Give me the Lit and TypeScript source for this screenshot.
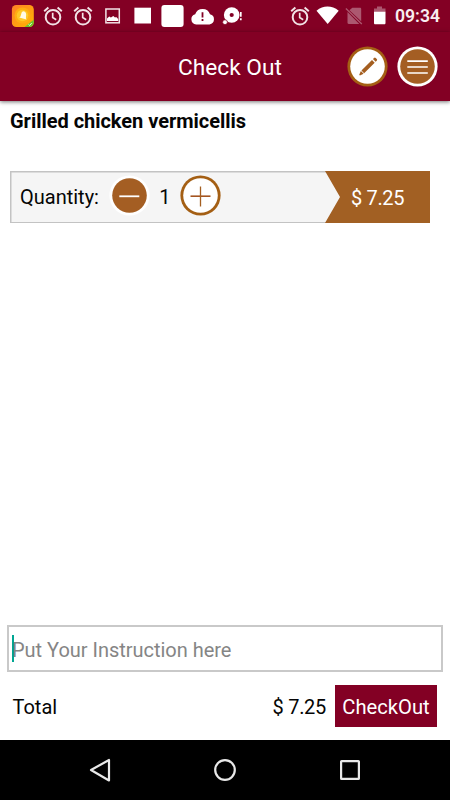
import { LitElement, html, css, svg } from "lit";
import { customElement, property } from "lit/decorators.js";

const alarm = svg`
  <g fill="none" stroke="#f2e2e6" stroke-width="2">
    <circle cx="15" cy="17.2" r="7.3"/>
    <path d="M6.200 11.200l4.200-3.600M23.800 11.200l-4.200-3.600"/>
    <path d="M14.700 12.800v4.800l3.500 2.100" stroke-width="1.700"/>
  </g>`;

const notifications = [
  svg`
    <defs>
      <linearGradient id="sun" x1="0" y1="0" x2="1" y2="1">
        <stop offset="0" stop-color="#ff8128"/><stop offset="1" stop-color="#ffb500"/>
      </linearGradient>
      <clipPath id="tile"><rect x="3.800" y="5" width="22" height="22" rx="4.500"/></clipPath>
    </defs>
    <g clip-path="url(#tile)">
      <rect x="3.500" y="5" width="22.500" height="22" fill="url(#sun)"/>
      <circle cx="14.500" cy="15.500" r="8" fill="#ffae12"/>
      <circle cx="14.500" cy="15.500" r="5.800" fill="#ffc928"/>
      <path d="M15.500 11.200c2.200.400 3 2.200 2.600 4.200l-.200 2.800.600 1.300-7.200-1.900 1.200-1.100.700-2.500c.400-1.800 1-2.700 2.300-2.800z" fill="#fffbe8"/>
      <path d="M26 19.500V27h-9.500z" fill="#6cc52c"/>
      <path d="M20.500 24.400l1.200 1 2-2.400" fill="none" stroke="#e8ffd5" stroke-width="1"/>
    </g>`,
  alarm,
  alarm,
  svg`
    <rect x="7.900" y="9" width="13.400" height="13.800" fill="none" stroke="#f2e2e6" stroke-width="1.500"/>
    <path d="M9 21v-2.600l2.200-2 1.700 1.200 2.400-1.700 1.700 1.600 1.200-.600 2 2V21z" fill="#fff"/>`,
  svg`<rect x="6.400" y="7.700" width="16.600" height="15.800" fill="#fff"/>`,
  svg`<rect x="3.400" y="5" width="22.200" height="22" rx="3" fill="#fff"/>`,
  svg`
    <path d="M8.200 24.500a5.200 5.200 0 0 1-1-10.200 7.800 7.800 0 0 1 14.800 0 5.200 5.200 0 0 1-.500 10.200z" fill="#fff"/>
    <path d="M14.500 12.200v5.200M14.500 19v2" stroke="#830024" stroke-width="1.800"/>`,
  svg`
    <circle cx="13.700" cy="15" r="7.800" fill="#fff"/>
    <circle cx="13.700" cy="15" r="2.100" fill="#830024"/>
    <circle cx="7" cy="22.200" r="2.400" fill="#fff" stroke="#830024" stroke-width=".700"/>
    <path d="M22.800 12v4.800M22.800 18.200v2" stroke="#fff" stroke-width="1.700"/>`,
];

@customElement("round-button")
class RoundButton extends LitElement {
  @property() kind = "";
  @property({ type: Boolean, reflect: true }) filled = false;

  static styles = css`
    :host { display: block; width: 41px; height: 41px; flex: none; }
    svg { display: block; }
  `;

  glyph() {
    switch (this.kind) {
      case "edit":
        return svg`
          <g transform="translate(20.900 20.800) rotate(45)" fill="#a45e20">
            <path d="M-1.900-7.700h3.800V7.200h-3.800zM-1.900 8h3.800L.500 11.800h-1z"/>
            <path d="M-1.900-10.600a1.200 1.200 0 0 1 1.200-1.200h1.400a1.200 1.200 0 0 1 1.200 1.200v1.600h-3.800z"/>
          </g>`;
      case "menu":
        return svg`<path d="M10.300 15.200h20.500M10.300 21h20.500M10.300 27h20.500" stroke="#fff" stroke-width="1.700"/>`;
      case "minus":
        return svg`<path d="M10.300 21.300h20" stroke="#fff" stroke-width="1.800"/>`;
      default:
        return svg`
          <path d="M10.500 21.200h20" stroke="#a45420" stroke-width="1.600"/>
          <path d="M20.500 11.500v20" stroke="#a45e20" stroke-width="1.300"/>`;
    }
  }

  render() {
    return html`<svg width="41" height="41" viewBox="0 0 41 41">
      <circle cx="20.500" cy="20.500" r="20.100" fill=${this.filled ? "#fff" : "#a45f14"} />
      <circle cx="20.500" cy="20.500" r="17.300" fill=${this.filled ? "#a45e23" : "#fff"} />
      ${this.glyph()}
    </svg>`;
  }
}

@customElement("app-root")
class AppRoot extends LitElement {
  static styles = css`
    :host {
      display: flex; flex-direction: column; width: 450px; height: 800px;
      box-sizing: border-box; overflow: hidden; background: #fff; color: #050505;
      font: 20px/24px Roboto, "Noto Sans", sans-serif;
    }
    * { box-sizing: border-box; }
    svg { display: block; flex: none; }
    .status { height: 32px; display: flex; background: #830024; padding-left: 8px; flex: none; }
    .system { display: flex; margin-left: 37px; }
    .clock { font-size: 17.600px; font-weight: 600; line-height: 33px; color: #f9edf0; margin-left: 8px; white-space: nowrap; }
    .bar {
      height: 69px; flex: none; display: flex; align-items: center; background: #830024;
      box-shadow: 0 1px 4px rgba(0, 0, 0, .55); padding-right: 12px;
    }
    .title { width: 347px; padding: 2px 0 0 178px; font-size: 22.700px; line-height: 28px; color: #fff; white-space: nowrap; }
    .bar round-button + round-button { margin-left: 9px; }
    .name { font-weight: 700; letter-spacing: -.030px; margin: 8px 10px 0; white-space: nowrap; }
    .quantity {
      margin: 38px 20px 0 10px; height: 52px; flex: none; display: flex; align-items: center;
      background: linear-gradient(#c3c3c3, #c3c3c3) top / 100% 1.500px no-repeat,
        linear-gradient(#c3c3c3, #c3c3c3) bottom / 100% 1.500px no-repeat,
        linear-gradient(#c3c3c3, #c3c3c3) left / 1.500px 100% no-repeat, #f5f5f5;
    }
    .label { width: 99px; padding-left: 10px; }
    .count { width: 29.500px; text-align: center; }
    .quantity round-button { margin-top: -3px; }
    .price {
      margin-left: auto; width: 105px; height: 52px; padding: 2px 0 0 26px; line-height: 50px;
      background: #a26023; color: #fff; letter-spacing: -.350px;
      clip-path: polygon(0 0, 100% 0, 100% 100%, 0 100%, 15px 50%);
    }
    .note {
      margin: auto 7px 0; height: 47px; flex: none; border: 2px solid #c9c9c9;
      display: flex; align-items: center; padding-left: 3px; color: #858585;
    }
    .hint { padding-top: 2px; letter-spacing: -.020px; }
    .caret { width: 2px; height: 27px; background: #00a693; margin-right: -2px; }
    .footer { height: 68px; flex: none; display: flex; align-items: center; padding: 0 13px 0 12.500px; }
    .total, .sum { padding-top: 2px; }
    .sum { margin-left: auto; margin-right: 9px; letter-spacing: -.300px; }
    .pay {
      width: 102px; height: 42px; background: #830024; color: #fff; border: 0; padding: 3px 0 0;
      font: 20.200px/39px Roboto, "Noto Sans", sans-serif; text-align: center; white-space: nowrap;
    }
    .nav { height: 60px; flex: none; background: #000; display: flex; justify-content: space-between; padding: 0 85px; align-items: center; }
  `;

  render() {
    return html`
      <div class="status">
        ${notifications.map((n) => html`<svg width="30" height="32" viewBox="0 0 30 32">${n}</svg>`)}
        <div class="system">
          <svg width="30" height="32" viewBox="0 0 30 32">${alarm}</svg>
          <svg width="72" height="32" viewBox="0 0 72 32">
            <path d="M1.500 10.700C5 7.800 8.600 6.500 12.500 6.500s7.700 1.300 11.200 4.200L12.700 24z" fill="#fff"/>
            <path d="M37.300 7.700h7.700c.700 0 1.200.500 1.200 1.200v12.400L34.400 10.200zM32.500 12l11.800 12H33.700c-.700 0-1.200-.500-1.200-1.200z" fill="#ac5870"/>
            <path d="M30.900 8.500L46.800 24" stroke="#ac5870" stroke-width="1.300"/>
            <path d="M59 12V8.500h3V6.500h5v2h3.500V12z" fill="#ac5870"/>
            <path d="M59 11.700h11.500V23c0 .800-.500 1.300-1.200 1.300h-9.100c-.700 0-1.200-.500-1.200-1.300z" fill="#fff"/>
          </svg>
        </div>
        <div class="clock">09:34</div>
      </div>
      <div class="bar">
        <div class="title">Check Out</div>
        <round-button kind="edit"></round-button>
        <round-button kind="menu" filled></round-button>
      </div>
      <div class="name">Grilled chicken vermicellis</div>
      <div class="quantity">
        <div class="label">Quantity:</div>
        <round-button kind="minus" filled></round-button>
        <div class="count">1</div>
        <round-button kind="plus"></round-button>
        <div class="price">$ 7.25</div>
      </div>
      <div class="note"><div class="caret"></div><div class="hint">Put Your Instruction here</div></div>
      <div class="footer">
        <div class="total">Total</div>
        <div class="sum">$ 7.25</div>
        <button class="pay">CheckOut</button>
      </div>
      <div class="nav">
        <svg width="30" height="30" viewBox="0 0 30 30"><path d="M6 15L24 5v20.500z" fill="none" stroke="#e8e8e8" stroke-width="2.200" stroke-linejoin="round"/></svg>
        <svg width="30" height="30" viewBox="0 0 30 30"><circle cx="15" cy="15" r="9.800" fill="none" stroke="#e8e8e8" stroke-width="2.200"/></svg>
        <svg width="30" height="30" viewBox="0 0 30 30"><rect x="6.100" y="6.100" width="17.800" height="17.800" rx=".500" fill="none" stroke="#e8e8e8" stroke-width="2.200"/></svg>
      </div>
    `;
  }
}
